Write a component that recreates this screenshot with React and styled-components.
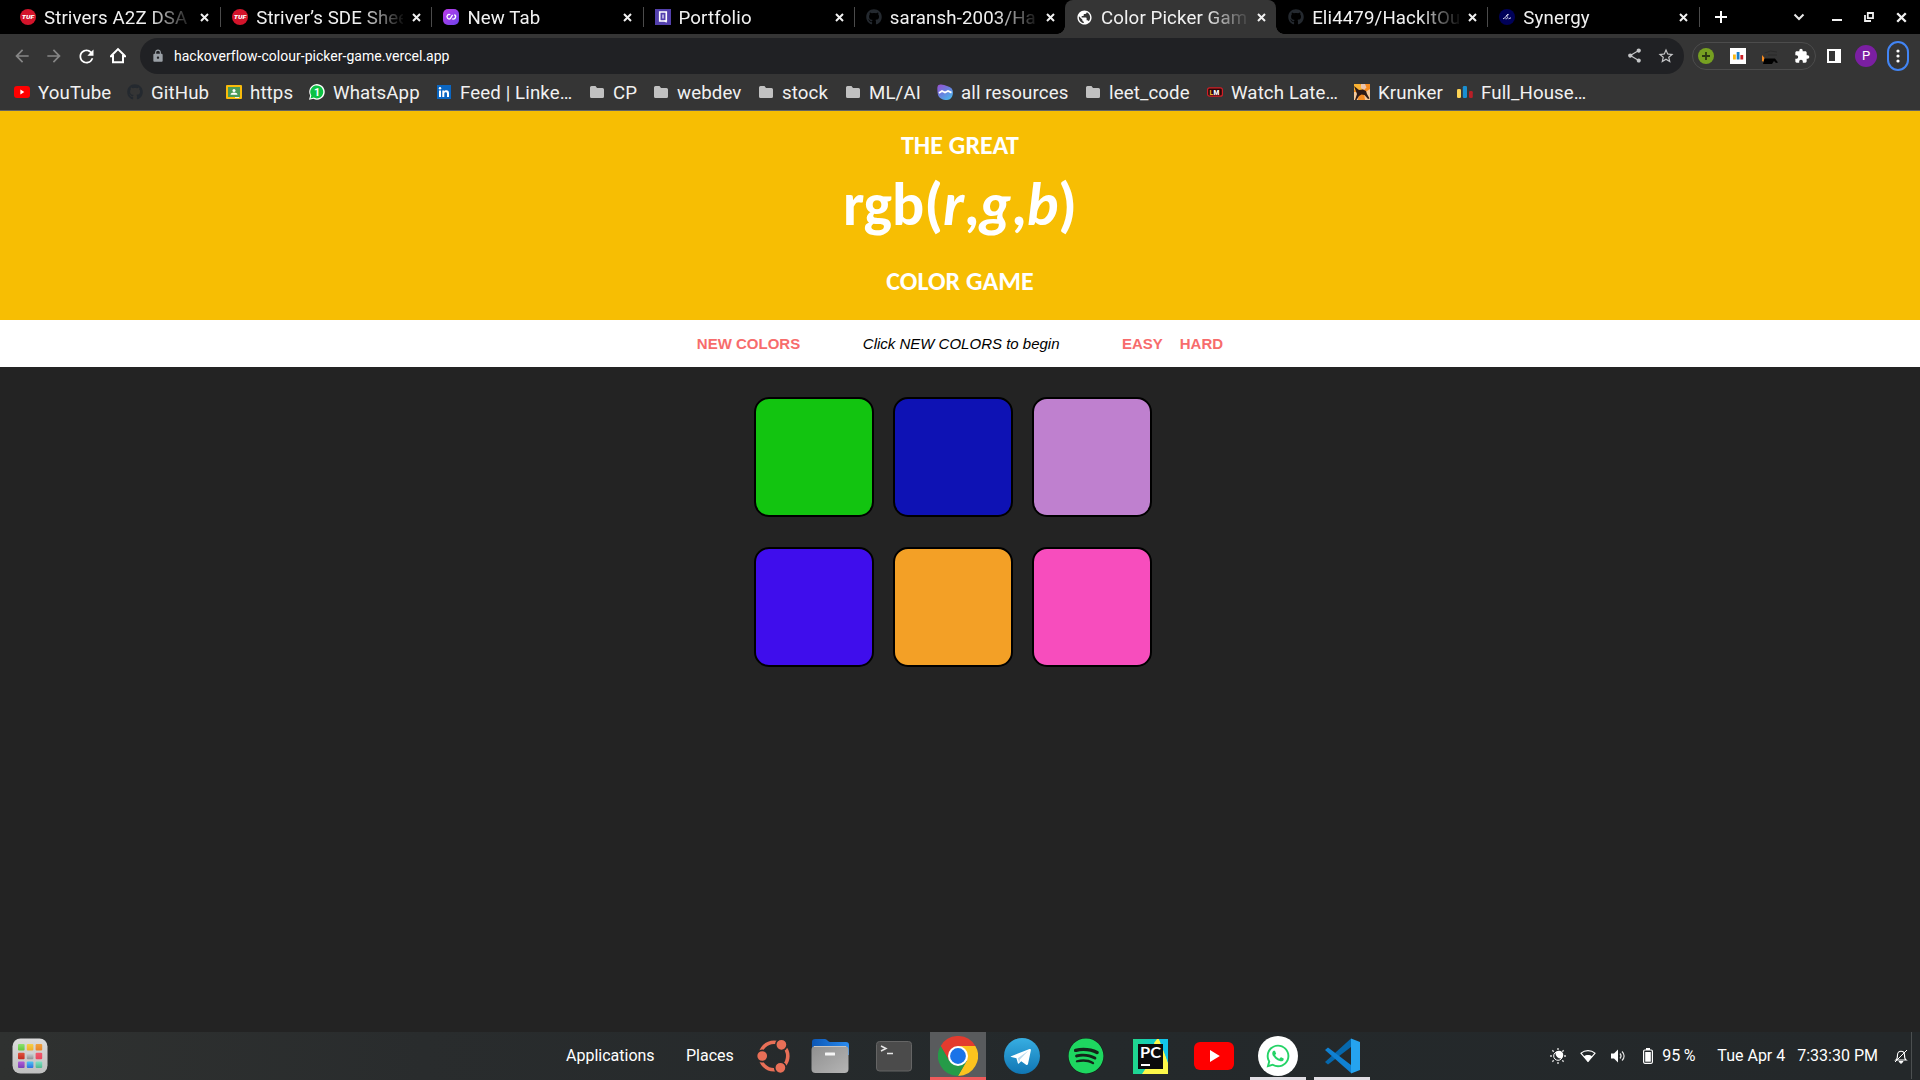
import React from "react";
import styled, { createGlobalStyle, css } from "styled-components";
import { FaGithub, FaSpotify, FaWhatsapp } from "react-icons/fa";
import {
  MdArrowBack,
  MdArrowForward,
  MdRefresh,
  MdLock,
  MdShare,
  MdStarBorder,
  MdExtension,
  MdPublic,
} from "react-icons/md";

const GlobalStyle = createGlobalStyle`
  * { box-sizing: border-box; }
  body { margin: 0; background: #232323; overflow: hidden; }
  svg { display: block; flex: none; }
`;

const Screen = styled.div`
  display: flex;
  flex-direction: column;
  width: 1920px;
  height: 1080px;
  font-family: Roboto, "Liberation Sans", sans-serif;
`;

/* ---------- tab strip ---------- */

const TabStrip = styled.div`
  display: flex;
  height: 34px;
  padding-left: 8px;
  background: #000;
`;

const TabBox = styled.div`
  position: relative;
  display: flex;
  align-items: center;
  width: ${(p) => (p.$first ? 212.2 : 211.2)}px;
  padding-left: 12px;
  color: #f1f1f1;
  ${(p) =>
    p.$divider &&
    css`
      &::after {
        content: "";
        position: absolute;
        right: -1px;
        top: 7px;
        width: 1px;
        height: 20px;
        background: #4b4b4b;
      }
    `}
  ${(p) =>
    p.$active &&
    css`
      background: #353535;
      border-radius: 8px 8px 0 0;
      &::before,
      &::after {
        content: "";
        position: absolute;
        bottom: 0;
        width: 8px;
        height: 8px;
      }
      &::before {
        left: -8px;
        background: radial-gradient(circle at 0 0, transparent 7.5px, #353535 8px);
      }
      &::after {
        right: -8px;
        background: radial-gradient(circle at 100% 0, transparent 7.5px, #353535 8px);
      }
    `}
`;

const TabTitle = styled.span`
  width: 147px;
  margin: 2px 9px 0 8px;
  white-space: nowrap;
  font-size: 18.67px;
  line-height: 28px;
  letter-spacing: 0.12px;
  mask-image: linear-gradient(to right, #000 105px, transparent 150px);
`;

const WindowControls = styled.div`
  display: flex;
  align-items: center;
  margin-left: ${(p) => p.$offset}px;
`;

const ControlCell = styled.div`
  display: flex;
  justify-content: center;
  width: ${(p) => p.$w}px;
`;

/* ---------- toolbar ---------- */

const Toolbar = styled.div`
  display: flex;
  align-items: center;
  height: 41px;
  padding: 3px 11px 0 6px;
  background: #353535;
`;

const ToolCell = styled.div`
  display: flex;
  justify-content: center;
  align-items: center;
  width: 32px;
  color: ${(p) => (p.$dim ? "#868686" : "#fff")};
`;

const AddressBar = styled.div`
  display: flex;
  align-items: center;
  width: 1544px;
  height: 36px;
  margin-left: 6px;
  padding: 0 9px 0 11px;
  border-radius: 18px;
  background: #202124;
  color: #9aa0a6;
`;

const Url = styled.span`
  flex: 1;
  margin-left: 9px;
  font-size: 14px;
  letter-spacing: 0.02px;
  color: #fff;
`;

const AddressActions = styled.div`
  display: flex;
  gap: 14px;
  color: #c4c5c7;
`;

const Extensions = styled.div`
  display: flex;
  align-items: center;
  gap: 16px;
  width: 124px;
  height: 28px;
  margin: 0 2px 0 8px;
  padding-left: 5px;
  border: 1px solid #4c4c4c;
  border-radius: 14px;
  color: #fff;
`;

const Avatar = styled.div`
  width: 22px;
  height: 22px;
  border-radius: 50%;
  background: #7b1fa2;
  font-size: 13px;
  line-height: 22px;
  text-align: center;
  color: #fff;
`;

const MenuButton = styled.div`
  display: flex;
  justify-content: center;
  align-items: center;
  width: 22px;
  height: 30px;
  margin-left: 5px;
  border: 2px solid #4285f4;
  border-radius: 11px;
`;

/* ---------- bookmarks ---------- */

const Bookmarks = styled.div`
  display: flex;
  height: 36px;
  padding-left: 14px;
  border-bottom: 1px solid #646464;
  background: #353535;
`;

const Bookmark = styled.div`
  display: flex;
  align-items: center;
  gap: 8px;
  width: ${(p) => p.$w}px;
  padding-bottom: 1px;
  white-space: nowrap;
  color: #f1f1f1;
  font-size: 18.67px;
  letter-spacing: 0.12px;
`;

const BookmarkLabel = styled.span`
  padding-top: 2px;
`;

/* ---------- game page ---------- */

const Header = styled.header`
  height: 209px;
  padding-top: 14px;
  background: #f7be03;
  color: #fff;
  text-align: center;
  font-family: Carlito, Lato, sans-serif;
  font-weight: 700;
  font-size: 26px;
`;

const HeaderLine = styled.div`
  line-height: 40px;
`;

const HeaderRgb = styled.h1`
  margin: 0 0 17px;
  font-size: 60px;
  line-height: 79px;
`;

const ControlStrip = styled.div`
  display: flex;
  justify-content: center;
  align-items: center;
  height: 47px;
  background: #fff;
  font: 15px "Liberation Sans", Arial, sans-serif;
`;

const TextButton = styled.span`
  font-weight: 700;
  color: #f76c6c;
  margin-left: ${(p) => p.$gap || 0}px;
`;

const Message = styled.span`
  margin: 0 62.4px 0 62.6px;
  font-style: italic;
  color: #000;
`;

const Board = styled.main`
  flex: 1;
  padding: 30px 0 0 754px;
  background: #232323;
`;

const Squares = styled.div`
  display: grid;
  grid-template-columns: repeat(3, 120px);
  gap: 30px 19px;
`;

const Square = styled.div`
  height: 120px;
  border: 2px solid #000;
  border-radius: 15px;
  background: ${(p) => p.$color};
`;

/* ---------- dock ---------- */

const Dock = styled.footer`
  display: flex;
  height: 48px;
  background: linear-gradient(to right, #2f3130, #292c2d 22%, #24292b 55%, #24282a);
  color: #fff;
  font-size: 16px;
`;

const DockLeft = styled.div`
  display: flex;
  align-items: center;
  width: 566px;
  padding-left: 12px;
`;

const DockLabel = styled.span`
  width: ${(p) => p.$w}px;
  line-height: 47px;
`;

const DockItem = styled.div`
  display: flex;
  align-items: center;
  justify-content: center;
  width: 56px;
  margin-right: ${(p) => (p.$tight ? 0 : 8)}px;
  background: ${(p) => (p.$active ? "#595b5d" : "transparent")};
  box-shadow: ${(p) => (p.$line ? `inset 0 -3px ${p.$line}` : "none")};
`;

const Tray = styled.div`
  display: flex;
  align-items: center;
  height: 47px;
  margin-left: auto;
  padding-right: 8px;
`;

const TrayIcon = styled.div`
  display: flex;
  justify-content: center;
  width: 30px;
`;

const BellCell = styled(TrayIcon)`
  width: 14px;
  margin-left: 16px;
`;

const TrayText = styled.span`
  line-height: 46px;
  margin-left: ${(p) => p.$gap}px;
  white-space: pre;
  word-spacing: ${(p) => p.$ws || 0}px;
`;

const TrayEdge = styled.div`
  width: 1px;
  height: 47px;
  background: #4b4f50;
  margin-left: 3px;
`;

/* ---------- icons ---------- */

const Cross = ({ size = 9, w = 2 }) => (
  <svg width={size} height={size} viewBox="0 0 9 9">
    <path d="M1 1l7 7M8 1l-7 7" stroke="#f1f1f1" strokeWidth={w} />
  </svg>
);

const TufIcon = () => (
  <svg width="16" height="16" viewBox="0 0 16 16">
    <circle cx="8" cy="8" r="8" fill="#d3142b" />
    <text x="8" y="10.2" textAnchor="middle" textLength="12.5" lengthAdjust="spacingAndGlyphs" fontSize="5.6" fontWeight="900" fontStyle="italic" fill="#fff" fontFamily="Roboto, sans-serif">TUF</text>
  </svg>
);

const NewTabIcon = () => (
  <svg width="16" height="16" viewBox="0 0 16 16">
    <defs>
      <linearGradient id="ntg" x1="0" y1="0" x2="1" y2="1">
        <stop offset="0" stopColor="#c03bea" />
        <stop offset="1" stopColor="#6a43ea" />
      </linearGradient>
    </defs>
    <rect width="16" height="16" rx="5" fill="url(#ntg)" />
    <path d="M7.3 5.8A2.200 2.200 0 1 0 7.300 9.600L9.600 5.800M9 9.800A2.200 2.200 0 1 0 11.300 5.600" fill="none" stroke="#fff" strokeWidth="1.300" />
  </svg>
);

const PortfolioIcon = () => (
  <svg width="16" height="16" viewBox="0 0 16 16">
    <rect width="16" height="16" fill="#5340ad" />
    <path d="M4.700 3h6.600v9H4.700z" fill="none" stroke="#fff" strokeWidth="1.600" />
    <path d="M7.200 5.500h1.600v4H7.200z" fill="#c9c2ea" />
    <path d="M8.500 11.500h3V14z" fill="#fff" />
  </svg>
);

const Octocat = () => <FaGithub size={16} color="#24292f" />;

const GlobeBox = styled.div`
  width: 16px;
  svg {
    margin-left: -0.5px;
  }
`;

const Globe = () => (
  <GlobeBox>
    <MdPublic size={17} color="#fff" />
  </GlobeBox>
);

const SynergyIcon = () => (
  <svg width="16" height="16" viewBox="0 0 16 16">
    <circle cx="8" cy="8" r="8" fill="#000158" />
    <path d="M4 9.800c2.500 0 3.500-4.600 5-4.600s-2.200 2.600-.8 3-.2 1.800-1.700 1.600M9.500 9.800l2.500-1" fill="none" stroke="#d3d3ee" strokeWidth="1" />
  </svg>
);

const HomeIcon = () => (
  <svg width="18" height="18" viewBox="0 0 18 18">
    <path d="M4 8v7.200h10V8M1.800 9.300L9 2.100l7.200 7.200" fill="none" stroke="#fff" strokeWidth="2" />
    <path d="M1 9.500h4M13 9.500h4" stroke="#fff" strokeWidth="1.600" />
  </svg>
);

const YouTube = ({ w, h, r }) => (
  <svg width={w} height={h} viewBox={`0 0 ${w} ${h}`}>
    <rect width={w} height={h} rx={r} fill="#f00" />
    <path d={`M${w * 0.4} ${h * 0.29}L${w * 0.645} ${h / 2}L${w * 0.4} ${h * 0.71}z`} fill="#fff" />
  </svg>
);

const ClassroomIcon = () => (
  <svg width="16" height="14" viewBox="0 0 16 14">
    <rect width="16" height="14" rx="1" fill="#f9bb0b" />
    <rect x="2" y="2" width="12" height="10" fill="#4a9a57" />
    <circle cx="8" cy="5.500" r="1.500" fill="#fff" />
    <path d="M4.500 9.800c0-3 7-3 7 0z" fill="#fff" />
    <path d="M9 12h4v1H9z" fill="#f3f3e0" />
  </svg>
);

const WhatsAppBadge = () => (
  <svg width="16" height="16" viewBox="0 0 16.500 16">
    <path d="M0 16l1.200-4.300A8 8 0 1 1 4.600 15z" fill="#fff" />
    <path d="M1.500 14.600l.9-3A6.700 6.700 0 1 1 4.800 13.800z" fill="#0cc143" />
    <text x="8.300" y="12" textAnchor="middle" fontSize="11" fontWeight="700" fill="#fff" fontFamily="Roboto, sans-serif">1</text>
  </svg>
);

const LinkedInIcon = () => (
  <svg width="16" height="14" viewBox="0 0 16 14">
    <rect x="1" width="14" height="14" fill="#0a66c2" />
    <path d="M3 5.500h2V12H3zM6.300 5.500h1.900v.9c.9-1.600 4.800-1.600 4.800 1.600v4h-2V8.600c0-1.900-2.700-1.800-2.700 0V12h-2z" fill="#fff" />
    <circle cx="4" cy="3.300" r="1.200" fill="#fff" />
  </svg>
);

const Folder = () => (
  <svg width="15" height="14" viewBox="0 0 15 14">
    <path d="M0 2.500A1.500 1.500 0 0 1 1.500 1h4L7 3h5.500A1.500 1.500 0 0 1 14 4.500v7a1.500 1.500 0 0 1-1.500 1.500h-11A1.500 1.500 0 0 1 0 11.500z" fill="#c1c1c1" />
  </svg>
);

const ResourcesIcon = () => (
  <svg width="16" height="16" viewBox="0 0 16 16">
    <defs>
      <linearGradient id="resg" x1="0" y1="0" x2=".7" y2="1">
        <stop offset="0" stopColor="#9b4fd0" />
        <stop offset=".5" stopColor="#6b7bdd" />
        <stop offset="1" stopColor="#4db3ea" />
      </linearGradient>
    </defs>
    <path d="M1 1.500C3-.5 7 .5 10 2c4 1 6 3 6 6.500 0 4-2.500 7.500-6 7.500-4.500 0-8.500-2-9.200-6C.3 7 0 3 1 1.500z" fill="url(#resg)" />
    <path d="M2 9l3-2 3 1.600L11 7l3.500 1.600" fill="none" stroke="#fff" strokeWidth="1.800" />
  </svg>
);

const LmIcon = () => (
  <svg width="16" height="16" viewBox="0 0 16 16">
    <rect x=".6" y="3.800" width="14.800" height="8.400" rx="2" fill="#2a0608" stroke="#d22027" strokeWidth="1.200" />
    <text x="2.600" y="10.500" fontSize="6.600" fontWeight="900" fill="#e8b62e" fontFamily="Roboto, sans-serif">L</text>
    <text x="6.600" y="10.500" fontSize="6.600" fontWeight="900" fill="#fff" fontFamily="Roboto, sans-serif">M</text>
  </svg>
);

const KrunkerIcon = () => (
  <svg width="16" height="16" viewBox="0 0 16 16">
    <rect width="16" height="16" fill="#f58a1f" />
    <path d="M0 0h6l3 5-4 3-5-2z" fill="#f9b233" />
    <path d="M0 8h5l-1 8H0zM10 9l6-4v11h-5z" fill="#f6c89a" />
    <path d="M7 0h4l1.500 3.500L10 6 7 4z" fill="#eac4ae" />
    <path d="M0 2l5 4L9 5.500l3 1.500 1 3 2.500 4.500-1.500.5-3.500-4-3-.5L5 12l-2.500 4H1l2-6L2 7.500z" fill="#2e1a17" />
  </svg>
);

const BarsIcon = () => (
  <svg width="16" height="16" viewBox="0 0 16 16">
    <rect x="0" y="5" width="4" height="9" rx="1.300" fill="#fcd354" />
    <rect x="5.800" y="2" width="4.200" height="12" rx="1.300" fill="#1a8fd1" />
    <rect x="12" y="7" width="3.800" height="7" rx="1.300" fill="#b81f28" />
  </svg>
);

const PlusExt = () => (
  <svg width="16" height="16" viewBox="0 0 16 16">
    <circle cx="8" cy="8" r="8" fill="#76a021" />
    <path d="M8 4v8M4 8h8" stroke="#2b3a12" strokeWidth="1.800" />
  </svg>
);

const BarsExt = () => (
  <svg width="16" height="16" viewBox="0 0 16 16">
    <rect width="16" height="16" fill="#fff" />
    <rect x="3" y="6.500" width="2.800" height="5" fill="#fbb914" />
    <rect x="6.700" y="4" width="2.800" height="7.500" fill="#1a7fc9" />
    <rect x="10.400" y="7" width="2.800" height="4.500" fill="#cb2027" />
  </svg>
);

const CatExt = () => (
  <svg width="16" height="16" viewBox="0 0 16 16">
    <path d="M0 7l2.500 3-1 4-1.500-1z" fill="#f58a1f" />
    <path d="M1 16l1.500-5.500H13l3 4-2 .5-2-2-2 3z" fill="#000" />
    <path d="M2.500 5l6-2 6.500 1M6 7h9" stroke="#2b2b2b" fill="none" />
  </svg>
);

const SidePanel = () => (
  <svg width="14" height="14" viewBox="0 0 14 14">
    <path fillRule="evenodd" d="M0 0h14v14H0zM2 2v10h6V2z" fill="#fff" />
  </svg>
);

const Dots = () => (
  <svg width="4" height="14" viewBox="0 0 4 14">
    <circle cx="2" cy="2" r="1.600" fill="#fff" />
    <circle cx="2" cy="7" r="1.600" fill="#fff" />
    <circle cx="2" cy="12" r="1.600" fill="#fff" />
  </svg>
);

const launcherColors = [
  ["#8be36f", "#63c83f"], ["#f7cf46", "#eeb02c"], ["#f2a03a", "#e8842a"],
  ["#e0523c", "#c22a20"], ["#d5dadd", "#8d9294"], ["#f0596e", "#e8485e"],
  ["#b05ad8", "#7a3fb5"], ["#4cc3f2", "#2f6fe0"], ["#7fe0c4", "#4fb88e"],
];

const Launcher = () => (
  <svg width="36" height="36" viewBox="0 0 36 36">
    <defs>
      <linearGradient id="lbg" x1="0" y1="0" x2="0" y2="1">
        <stop offset="0" stopColor="#dcdcdc" />
        <stop offset="1" stopColor="#bfbfbf" />
      </linearGradient>
      {launcherColors.map(([a, b], i) => (
        <linearGradient key={i} id={`lc${i}`} x1="0" y1="0" x2="0" y2="1">
          <stop offset="0" stopColor={a} />
          <stop offset="1" stopColor={b} />
        </linearGradient>
      ))}
    </defs>
    <rect x=".5" y=".5" width="35" height="35" rx="8" fill="url(#lbg)" />
    {launcherColors.map((_, i) => (
      <rect key={i} x={6 + (i % 3) * 8.8} y={6 + Math.floor(i / 3) * 8.8} width="6.600" height="6.400" rx="1" fill={`url(#lc${i})`} />
    ))}
  </svg>
);

const UbuntuIcon = () => (
  <svg width="34" height="34" viewBox="-17 -17 34 34">
    <circle r="13.800" fill="none" stroke="#e86f57" strokeWidth="3.600" />
    {[[-11.8, 0], [7.4, -11.2], [6.4, 11.8]].map(([x, y]) => (
      <circle key={x} cx={x} cy={y} r="5.700" fill="#e86f57" stroke="#272b2c" strokeWidth="1.700" />
    ))}
  </svg>
);

const FilesIcon = () => (
  <svg width="38" height="34" viewBox="0 0 38 34">
    <defs>
      <linearGradient id="fback" x1="0" y1="0" x2="1" y2="0">
        <stop offset="0" stopColor="#0b56b5" />
        <stop offset="1" stopColor="#2a8cf0" />
      </linearGradient>
      <linearGradient id="ffront" x1="0" y1="0" x2="1" y2="1">
        <stop offset="0" stopColor="#8f8f8f" />
        <stop offset="1" stopColor="#b5b5b5" />
      </linearGradient>
    </defs>
    <path d="M1 3a3 3 0 0 1 3-3h10c2 0 3 3 5 3h16a3 3 0 0 1 3 3v10H1z" fill="url(#fback)" />
    <rect x=".5" y="7" width="37" height="27" rx="4" fill="url(#ffront)" />
    <path d="M3 7.500h32" stroke="#c4c4c4" />
    <rect x="14" y="13.500" width="10" height="3" rx=".5" fill="#f5f5f5" />
  </svg>
);

const TerminalIcon = () => (
  <svg width="36" height="31" viewBox="0 0 36 31">
    <rect x=".5" y=".5" width="35" height="29.500" rx="3" fill="#4b4b4b" stroke="#656565" />
    <path d="M5 5l5 2.500L5 10M11 12.500h6" fill="none" stroke="#e6e6e6" strokeWidth="1.500" />
  </svg>
);

const ChromeIcon = () => (
  <svg width="40" height="40" viewBox="0 0 48 48">
    <path d="M24 12h20.800A24 24 0 0 1 24 48l10.400-18z" fill="#fcc31e" />
    <path d="M3.200 12A24 24 0 0 1 44.800 12H24L13.600 30z" fill="#e33b2e" />
    <path d="M3.200 12l10.400 18L24 36l10.400-6L24 48A24 24 0 0 1 3.200 12z" fill="#259b48" />
    <circle cx="24" cy="24" r="12" fill="#fff" />
    <circle cx="24" cy="24" r="9.500" fill="#1a73e8" />
  </svg>
);

const TelegramIcon = () => (
  <svg width="36" height="36" viewBox="0 0 240 240">
    <defs>
      <linearGradient id="tg" x1="0" y1="0" x2="0" y2="1">
        <stop offset="0" stopColor="#37aee2" />
        <stop offset="1" stopColor="#1076b4" />
      </linearGradient>
    </defs>
    <circle cx="120" cy="120" r="120" fill="url(#tg)" />
    <path d="M48 122l122-49c8-2 10 3 9 10l-19 91c-2 7-8 8-13 4l-32-23-16 15c-4 3-6 1-7-4l-9-31-34-9c-5-1-6-3-1-4z" fill="#fff" />
    <path d="M92 135l70-50-56 58-4 26z" fill="#b9d9ec" />
  </svg>
);

const SpotifyDisc = styled.div`
  display: flex;
  border-radius: 50%;
  background: #14251a;
`;

const PyCharmIcon = () => (
  <svg width="35" height="35" viewBox="0 0 35 35">
    <defs>
      <linearGradient id="pcg" x1="0" y1="0" x2="1" y2="0">
        <stop offset="0" stopColor="#21d789" />
        <stop offset="1" stopColor="#07c3f2" />
      </linearGradient>
    </defs>
    <rect width="35" height="35" fill="url(#pcg)" />
    <path d="M21 4l3-4h2l3 6 6 18v11H9l4-6 12-8z" fill="#fcf84a" />
    <path d="M26 0h9v23L29 8z" fill="#12c5ea" />
    <rect x="5" y="5" width="25" height="25" fill="#0b0b0b" />
    <text x="7" y="19" fontSize="15" fontWeight="700" textLength="21" lengthAdjust="spacingAndGlyphs" fill="#fff" fontFamily="Lato, sans-serif">PC</text>
    <rect x="8" y="25" width="9" height="2" fill="#fff" />
  </svg>
);

const WhatsAppDisc = styled.div`
  display: flex;
  align-items: center;
  justify-content: center;
  width: 40px;
  height: 40px;
  border-radius: 50%;
  background: #fff;
  color: #25d366;
`;

const CodeIcon = () => (
  <svg width="36" height="36" viewBox="0 0 36 36">
    <path d="M1 24l3 2.500L27 9V.5z" fill="#0668ad" />
    <path d="M1 12l3-2.500L27 27v8z" fill="#1081d2" />
    <path d="M27 .5L36 4v28l-9 3.500z" fill="#25a3ef" />
  </svg>
);

const SunIcon = () => (
  <svg width="16" height="16" viewBox="-8 -8 16 16">
    <circle r="4.300" fill="none" stroke="#fff" strokeWidth="1" />
    <path d="M-2.500 -3.500A4.300 4.300 0 1 1 3.500 2.500A5.500 5.500 0 0 1 -2.500 -3.500z" fill="#fff" />
    {[0, 45, 90, 135, 180, 225, 270, 315].map((a) => (
      <path key={a} d="M6 0h2" stroke="#d8d8d8" strokeWidth="1.400" transform={`rotate(${a})`} />
    ))}
  </svg>
);

const WifiIcon = () => (
  <svg width="16" height="14" viewBox="0 0 16 14">
    <path d="M1 4.200C5 .8 11 .8 15 4.200L8 12.500z" fill="none" stroke="#fff" strokeWidth="1.100" />
    <path d="M3.800 7.500c2.400-1.900 6-1.900 8.400 0L8 13z" fill="#fff" />
  </svg>
);

const VolumeIcon = () => (
  <svg width="16" height="14" viewBox="0 0 16 14">
    <path d="M1 4.500h3L8 .5v13L4 9.500H1z" fill="#fff" />
    <path d="M10 4.500c1.300 1.500 1.300 3.500 0 5M12 2.500c2.800 2.700 2.800 6.300 0 9" fill="none" stroke="#e2e2e2" strokeWidth="1.200" />
  </svg>
);

const BatteryIcon = () => (
  <svg width="10" height="16" viewBox="0 0 10 16">
    <rect x=".6" y="2" width="8.800" height="13.300" rx="1.200" fill="none" stroke="#fff" strokeWidth="1.200" />
    <rect x="3" y="0" width="4" height="2" fill="#fff" />
    <rect x="2.200" y="4" width="5.600" height="9.700" fill="#fff" />
  </svg>
);

const BellIcon = () => (
  <svg width="14" height="16" viewBox="0 0 14 16">
    <path d="M2 12c1.500-1 1.500-2.500 1.500-5 0-5 7-5 7 0 0 2.500 0 4 1.500 5z" fill="none" stroke="#fff" strokeWidth="1.100" />
    <path d="M5 13.500h4L7 15.500zM1 14L13 2" stroke="#fff" strokeWidth="1" fill="#fff" />
  </svg>
);

/* ---------- data ---------- */

const tabs = [
  { title: "Strivers A2Z DSA", Icon: TufIcon },
  { title: "Striver’s SDE Shee", Icon: TufIcon },
  { title: "New Tab", Icon: NewTabIcon },
  { title: "Portfolio", Icon: PortfolioIcon },
  { title: "saransh-2003/Ha", Icon: Octocat },
  { title: "Color Picker Gam", Icon: Globe, active: true },
  { title: "Eli4479/HackItOu", Icon: Octocat },
  { title: "Synergy", Icon: SynergyIcon },
];

const YtSmall = () => <YouTube w={16} h={12} r={3} />;

const bookmarks = [
  ["YouTube", YtSmall, 113],
  ["GitHub", Octocat, 99],
  ["https", ClassroomIcon, 83],
  ["WhatsApp", WhatsAppBadge, 127],
  ["Feed | Linke…", LinkedInIcon, 154],
  ["CP", Folder, 64],
  ["webdev", Folder, 105],
  ["stock", Folder, 87],
  ["ML/AI", Folder, 91],
  ["all resources", ResourcesIcon, 149],
  ["leet_code", Folder, 121],
  ["Watch Late…", LmIcon, 147],
  ["Krunker", KrunkerIcon, 103],
  ["Full_House…", BarsIcon, 140],
];

const colors = ["#12c410", "#0e12b4", "#bf80cf", "#3f0dec", "#f3a026", "#f74dbd"];

export default function App() {
  return (
    <Screen>
      <GlobalStyle />
      <TabStrip>
        {tabs.map(({ title, Icon, active }, i) => (
          <TabBox key={i} $first={i === 0} $active={active} $divider={!active && !(tabs[i + 1] && tabs[i + 1].active)}>
            <Icon />
            <TabTitle>{title}</TabTitle>
            <Cross />
          </TabBox>
        ))}
        <WindowControls $offset={13}>
          <ControlCell $w={18}>
            <svg width="12" height="12" viewBox="0 0 12 12"><path d="M6 0v12M0 6h12" stroke="#fff" strokeWidth="2" /></svg>
          </ControlCell>
          <ControlCell $w={138}>
            <svg width="12" height="8" viewBox="0 0 12 8"><path d="M1.500 1.500L6 6l4.500-4.500" fill="none" stroke="#e8e8e8" strokeWidth="2" /></svg>
          </ControlCell>
        </WindowControls>
        <WindowControls $offset={-47}>
          <ControlCell $w={32}>
            <svg width="10" height="10" viewBox="0 0 10 10"><path d="M0 8h10" stroke="#f0f0f0" strokeWidth="2" /></svg>
          </ControlCell>
          <ControlCell $w={32}>
            <svg width="10" height="10" viewBox="0 0 10 10"><path d="M3.800 1h5.200v5.200H3.800zM1 3v6h6" fill="none" stroke="#f0f0f0" strokeWidth="1.800" /></svg>
          </ControlCell>
          <ControlCell $w={34}>
            <Cross size={11} w={1.9} />
          </ControlCell>
        </WindowControls>
      </TabStrip>

      <Toolbar>
        <ToolCell $dim><MdArrowBack size={20} /></ToolCell>
        <ToolCell $dim><MdArrowForward size={20} /></ToolCell>
        <ToolCell><MdRefresh size={21} /></ToolCell>
        <ToolCell><HomeIcon /></ToolCell>
        <AddressBar>
          <MdLock size={14} />
          <Url>hackoverflow-colour-picker-game.vercel.app</Url>
          <AddressActions>
            <MdShare size={17} />
            <MdStarBorder size={18} />
          </AddressActions>
        </AddressBar>
        <Extensions>
          <PlusExt />
          <BarsExt />
          <CatExt />
          <MdExtension size={16} />
        </Extensions>
        <ToolCell><SidePanel /></ToolCell>
        <ToolCell><Avatar>P</Avatar></ToolCell>
        <MenuButton><Dots /></MenuButton>
      </Toolbar>

      <Bookmarks>
        {bookmarks.map(([label, Icon, w]) => (
          <Bookmark key={label} $w={w}>
            <Icon />
            <BookmarkLabel>{label}</BookmarkLabel>
          </Bookmark>
        ))}
      </Bookmarks>

      <Header>
        <HeaderLine>THE GREAT</HeaderLine>
        <HeaderRgb>rgb(<i>r</i>,<i>g</i>,<i>b</i>)</HeaderRgb>
        <HeaderLine>COLOR GAME</HeaderLine>
      </Header>

      <ControlStrip>
        <TextButton>NEW COLORS</TextButton>
        <Message>Click NEW COLORS to begin</Message>
        <TextButton>EASY</TextButton>
        <TextButton $gap={17}>HARD</TextButton>
      </ControlStrip>

      <Board>
        <Squares>
          {colors.map((c) => (
            <Square key={c} $color={c} />
          ))}
        </Squares>
      </Board>

      <Dock>
        <DockLeft><Launcher /></DockLeft>
        <DockLabel $w={120}>Applications</DockLabel>
        <DockLabel $w={60}>Places</DockLabel>
        <DockItem $tight><UbuntuIcon /></DockItem>
        <DockItem><FilesIcon /></DockItem>
        <DockItem><TerminalIcon /></DockItem>
        <DockItem $active $line="#ef5b5b"><ChromeIcon /></DockItem>
        <DockItem><TelegramIcon /></DockItem>
        <DockItem><SpotifyDisc><FaSpotify size={36} color="#1ed760" /></SpotifyDisc></DockItem>
        <DockItem><PyCharmIcon /></DockItem>
        <DockItem><YouTube w={40} h={28} r={6} /></DockItem>
        <DockItem $line="#e0dde3"><WhatsAppDisc><FaWhatsapp size={26} /></WhatsAppDisc></DockItem>
        <DockItem $line="#e0dde3"><CodeIcon /></DockItem>
        <Tray>
          <TrayIcon><SunIcon /></TrayIcon>
          <TrayIcon><WifiIcon /></TrayIcon>
          <TrayIcon><VolumeIcon /></TrayIcon>
          <TrayIcon><BatteryIcon /></TrayIcon>
          <TrayText $gap={-1} $ws={-0.5}>95 %</TrayText>
          <TrayText $gap={22}>Tue Apr 4</TrayText>
          <TrayText $gap={12}>7:33:30 PM</TrayText>
          <BellCell><BellIcon /></BellCell>
          <TrayEdge />
        </Tray>
      </Dock>
    </Screen>
  );
}
